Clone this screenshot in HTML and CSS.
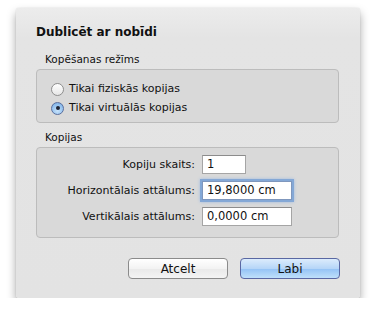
FILE: index.html
```html
<!DOCTYPE html>
<html lang="lv">
<head>
  <meta charset="UTF-8" />
  <title>Dublicēt ar nobīdi</title>
  <link rel="stylesheet" href="styles.css">
</head>
<body>
  <div class="dialog">
    <h1>Dublicēt ar nobīdi</h1>

    <div class="group-label">Kopēšanas režīms</div>
    <div class="box mode">
      <label class="radio"><span class="dot"></span>Tikai fiziskās kopijas</label>
      <label class="radio"><span class="dot on"></span>Tikai virtuālās kopijas</label>
    </div>

    <div class="group-label">Kopijas</div>
    <div class="box copies">
      <span class="lbl">Kopiju skaits:</span>
      <span class="field short">1</span>
      <span class="lbl">Horizontālais attālums:</span>
      <span class="field focus">19,8000 cm</span>
      <span class="lbl">Vertikālais attālums:</span>
      <span class="field">0,0000 cm</span>
    </div>

    <div class="buttons">
      <button class="btn">Atcelt</button>
      <button class="btn default">Labi</button>
    </div>
  </div>
</body>
</html>
```

FILE: styles.css
```css
body {
  margin: 0;
  background: #fff;
  font-family: 'DejaVu Sans', sans-serif;
  font-size: 11px;
  color: #111;
}

.dialog {
  margin: 8px 0 0 16px;
  width: 344px;
  height: 290px;
  box-sizing: border-box;
  padding: 16px 21px 0 20px;
  background: linear-gradient(to bottom, #ececec, #e4e4e4 30px, #e3e3e3);
  border-radius: 3px;
  box-shadow: 0 5px 10px rgba(0, 0, 0, 0.35), 0 0 1px rgba(0, 0, 0, 0.25);
}

h1 {
  margin: 0;
  font-size: 12px;
  font-weight: bold;
  line-height: 16px;
}

.group-label {
  margin: 12px 0 0 9px;
  line-height: 15px;
  font-size: 10.5px;
}

.group-label + .box {
  margin-top: 2px;
}

.box + .group-label {
  margin-top: 7px;
}

.box {
  background: #d9d9d9;
  border: 1px solid #bcbcbc;
  border-radius: 4px;
  box-sizing: border-box;
}

.mode {
  height: 54px;
  padding: 11px 0 0 14px;
  display: flex;
  flex-direction: column;
  gap: 3px;
}

.radio {
  display: flex;
  align-items: center;
  gap: 5px;
  line-height: 16px;
}

.dot {
  width: 13px;
  height: 13px;
  box-sizing: border-box;
  border-radius: 50%;
  border: 1px solid #8e8e8e;
  background: linear-gradient(to bottom, #ffffff, #e6e6e6);
  display: flex;
  align-items: center;
  justify-content: center;
}

.dot.on {
  border-color: #5a6f9e;
  background: radial-gradient(circle at 50% 70%, #c8e3fb, #8cbcec 70%, #6fa4dd);
}

.dot.on::after {
  content: "";
  width: 4px;
  height: 4px;
  border-radius: 50%;
  background: #1d2333;
}

.copies {
  height: 91px;
  display: grid;
  grid-template-columns: 158px auto;
  grid-auto-rows: 19px;
  column-gap: 7px;
  row-gap: 7px;
  align-items: center;
  align-content: start;
  padding-top: 7px;
}

.lbl {
  text-align: right;
}

.field {
  width: 90px;
  height: 19px;
  box-sizing: border-box;
  background: #fff;
  border: 1px solid #a5a5a5;
  border-top-color: #8c8c8c;
  padding-left: 4px;
  line-height: 17px;
  font-size: 11.5px;
}

.field.short {
  width: 44px;
}

.field.focus {
  box-shadow: 0 0 0 2px #84a8d6, 0 0 3px 2px #9dbbe3;
  border-color: #7f97bd;
}

.buttons {
  display: flex;
  justify-content: flex-end;
  gap: 12px;
  margin-top: 20px;
  margin-right: -1px;
}

.btn {
  width: 100px;
  height: 21px;
  font-family: 'DejaVu Sans', sans-serif;
  font-size: 12px;
  color: #111;
  border: 1px solid #8b8b8b;
  border-radius: 4px;
  background: linear-gradient(to bottom, #ffffff, #f3f3f3 50%, #e9e9e9 51%, #f4f4f4);
  padding: 0;
}

.btn.default {
  border-color: #5a68a3;
  background: linear-gradient(to bottom, #dcecfc, #b6d6f8 50%, #93c2f5 51%, #bfe0fb);
}
```
